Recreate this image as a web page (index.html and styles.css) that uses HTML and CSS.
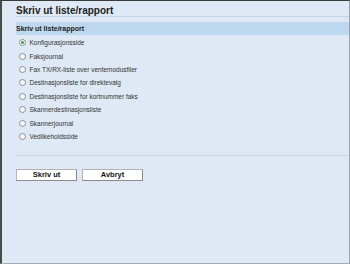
FILE: index.html
```html
<!DOCTYPE html>
<html lang="no">

<head>
    <meta charset="UTF-8">
    <meta name="viewport" content="width=device-width, initial-scale=1.0">
    <title>Skriv ut liste/rapport</title>
    <link rel="stylesheet" href="styles.css">
</head>

<body>
    <div class="window">
        <h1>Skriv ut liste/rapport</h1>

        <div class="section-head">Skriv ut liste/rapport</div>

        <ul class="report-list">
            <li><span class="radio checked"></span>Konfigurasjonsside</li>
            <li><span class="radio"></span>Faksjournal</li>
            <li><span class="radio"></span>Fax TX/RX-liste over ventemodusfiler</li>
            <li><span class="radio"></span>Destinasjonsliste for direktevalg</li>
            <li><span class="radio"></span>Destinasjonsliste for kortnummer faks</li>
            <li><span class="radio"></span>Skannerdestinasjonsliste</li>
            <li><span class="radio"></span>Skannerjournal</li>
            <li><span class="radio"></span>Vedlikeholdsside</li>
        </ul>

        <div class="divider"></div>

        <div class="actions">
            <button class="btn" type="button">Skriv ut</button>
            <button class="btn" type="button">Avbryt</button>
        </div>
    </div>
</body>

</html>
```

FILE: styles.css
```css
:root {
    --page-bg: #dee9f5;
    --band-bg: #bdd7ee;
    --line-color: #c6d3e0;
    --text-color: #333333;
    --title-color: #222222;
}

html,
body {
    margin: 0;
    background: var(--page-bg);
    font-family: "Liberation Sans", Arial, sans-serif;
}

.window {
    height: 264px;
    box-sizing: border-box;
    border-top: 1px solid #3b3b3b;
    border-left: 2px solid #4a4a4a;
    border-right: 1px solid #98a4b0;
    border-bottom: 1px solid #a3abb4;
    background: var(--page-bg);
    padding-left: 14px;
}

h1 {
    margin: 0;
    padding-top: 4px;
    font-size: 10px;
    line-height: 11px;
    font-weight: bold;
    color: var(--title-color);
    border-bottom: 1px solid var(--line-color);
}

.section-head {
    margin-top: 5px;
    height: 13px;
    line-height: 14px;
    background: var(--band-bg);
    font-size: 7px;
    font-weight: bold;
    color: var(--title-color);
}

.report-list {
    list-style: none;
    margin: 1px 0 0;
    padding: 0;
}

.report-list li {
    display: flex;
    align-items: center;
    gap: 4px;
    height: 13.4px;
    padding-left: 2.5px;
    font-size: 6.5px;
    color: var(--text-color);
}

.radio {
    width: 7px;
    height: 7px;
    box-sizing: border-box;
    border: 1px solid #8a8f96;
    border-radius: 50%;
    background: #f7f9fb;
    display: flex;
    align-items: center;
    justify-content: center;
}

.radio.checked::after {
    content: "";
    width: 3px;
    height: 3px;
    border-radius: 50%;
    background: #3f9a3a;
}

.divider {
    margin-top: 12px;
    border-top: 1px solid var(--line-color);
}

.actions {
    display: flex;
    gap: 5px;
    margin-top: 13px;
}

.btn {
    width: 61px;
    height: 12px;
    box-sizing: border-box;
    padding: 0;
    background: #ffffff;
    border: 1px solid #b4b4b4;
    border-right-color: #8c8c8c;
    border-bottom-color: #8c8c8c;
    font-family: "Liberation Sans", Arial, sans-serif;
    font-size: 7.5px;
    font-weight: bold;
    line-height: 10px;
    color: #111111;
}
```
